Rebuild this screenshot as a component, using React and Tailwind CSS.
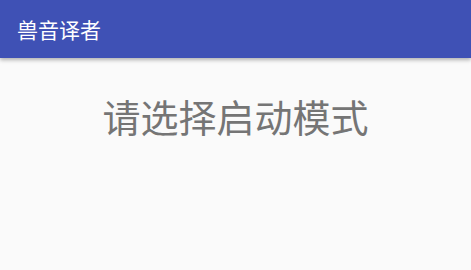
export default function App() {
  return (
    <div
      className="min-h-screen w-full bg-[#fafafa] flex flex-col"
      style={{ fontFamily: '"Noto Sans CJK SC", "Noto Sans", sans-serif' }}
    >
      {/* Toolbar */}
      <header className="h-[58px] bg-[#3f51b5] flex items-center px-[17px] shadow-[0_2px_4px_rgba(0,0,0,0.3)] relative z-10">
        <h1 className="text-white text-[21px] leading-none">兽音译者</h1>
      </header>

      <main className="flex justify-center pt-[39px]">
        <p className="text-[#757575] text-[38px] leading-none">请选择启动模式</p>
      </main>
    </div>
  );
}
